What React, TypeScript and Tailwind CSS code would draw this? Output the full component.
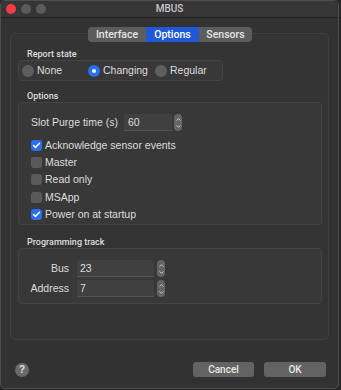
import { Check, ChevronUp, ChevronDown } from 'lucide-react';

const body = { fontFamily: '"Liberation Sans", Arial, sans-serif' };
const ui = { fontFamily: 'Roboto, "Liberation Sans", sans-serif' };

const Stepper = () => (
  <div className="flex h-[17px] w-[8px] flex-col items-center justify-center rounded-[4px] bg-[#646464]">
    <ChevronUp className="h-[7px] w-[7px] text-[#d8d8d8]" strokeWidth={3} />
    <ChevronDown className="h-[7px] w-[7px] text-[#d8d8d8]" strokeWidth={3} />
  </div>
);

const Radio = ({ on, label, w }: { on?: boolean; label: string; w: string }) => (
  <div className={`flex items-center gap-[3px] ${w}`}>
    {on ? (
      <span className="flex h-[12px] w-[12px] items-center justify-center rounded-full bg-[#2a6ef1]">
        <span className="h-[4px] w-[4px] rounded-full bg-white" />
      </span>
    ) : (
      <span className="h-[12px] w-[12px] rounded-full bg-[#5e5e5e]" />
    )}
    <span>{label}</span>
  </div>
);

const CheckRow = ({ on, label }: { on?: boolean; label: string }) => (
  <div className="flex h-[17.2px] items-center gap-[3px]">
    {on ? (
      <span className="flex h-[11px] w-[11px] items-center justify-center rounded-[3px] bg-[#2a6ef1]">
        <Check className="h-[9px] w-[9px] text-white" strokeWidth={4} />
      </span>
    ) : (
      <span className="h-[11px] w-[11px] rounded-[3px] bg-[#5a5a5a]" />
    )}
    <span>{label}</span>
  </div>
);

export default function App() {
  return (
    <div className="h-[390px] w-[341px] bg-[#262626] text-[10.5px] leading-[13px] text-[#dedede]" style={body}>
      <div className="flex h-[389px] w-[339px] flex-col rounded-[5px] border border-[#4e4e4e] bg-[#323232]">
        <div className="relative flex h-[17px] items-center border-b border-[#1f1f1f] bg-[#363636]">
          <div className="ml-[5px] flex gap-[5px]">
            <span className="h-[10px] w-[10px] rounded-full bg-[#fb3a44]" />
            <span className="h-[10px] w-[10px] rounded-full bg-[#5b5b5b]" />
            <span className="h-[10px] w-[10px] rounded-full bg-[#5b5b5b]" />
          </div>
          <div className="absolute inset-x-0 top-[1px] text-center text-[10px] font-medium leading-[14px] text-[#c8c8c8]" style={ui}>MBUS</div>
        </div>

        <div className="px-[9px] pt-[15px]">
          <div className="relative h-[307px] rounded-[5px] border border-[#3f3f3f] bg-[#343434] px-[7px] pt-[14px]">
            <div className="absolute left-[77px] top-[-7px] flex h-[15px] overflow-hidden rounded-[4px] bg-[#5c5c5c] text-[10.5px] font-medium leading-[15px] text-[#e6e6e6]" style={ui}>
              <div className="w-[58px] text-center">Interface</div>
              <div className="w-[53px] bg-[#2058d8] text-center text-white">Options</div>
              <div className="w-[53px] text-center">Sensors</div>
            </div>

            <div className="h-[12px] pl-[9px] text-[9px] font-medium leading-[12px]" style={ui}>Report state</div>
            <div className="flex h-[21px] w-[205px] items-center rounded-[4px] border border-[#444] bg-[#383838] pl-[3px]">
              <Radio label="None" w="w-[66px]" />
              <Radio on label="Changing" w="w-[67px]" />
              <Radio label="Regular" w="w-[60px]" />
            </div>

            <div className="mt-[9px] h-[12px] pl-[9px] text-[9px] font-medium leading-[12px]" style={ui}>Options</div>
            <div className="h-[123px] w-[304px] rounded-[4px] border border-[#444] bg-[#383838] pl-[12px] pt-[11px]">
              <div className="flex h-[17px] items-center">
                <span className="w-[93px]">Slot Purge time (s)</span>
                <div className="h-[17px] w-[48px] border-b border-[#555] bg-[#404040] pl-[4px] leading-[17px]">60</div>
                <div className="ml-[2px]"><Stepper /></div>
              </div>
              <div className="mt-[6px]">
                <CheckRow on label="Acknowledge sensor events" />
                <CheckRow label="Master" />
                <CheckRow label="Read only" />
                <CheckRow label="MSApp" />
                <CheckRow on label="Power on at startup" />
              </div>
            </div>

            <div className="mt-[11px] h-[12px] pl-[9px] text-[9px] font-medium leading-[12px]" style={ui}>Programming track</div>
            <div className="h-[56px] w-[304px] rounded-[4px] border border-[#444] bg-[#383838] pt-[11px]">
              <div className="flex h-[17px] items-center">
                <span className="w-[50px] text-right">Bus</span>
                <div className="ml-[8px] h-[17px] w-[77px] border-b border-[#555] bg-[#404040] pl-[3px] leading-[17px]">23</div>
                <div className="ml-[3px]"><Stepper /></div>
              </div>
              <div className="mt-[3px] flex h-[17px] items-center">
                <span className="w-[50px] text-right">Address</span>
                <div className="ml-[8px] h-[17px] w-[77px] border-b border-[#555] bg-[#404040] pl-[3px] leading-[17px]">7</div>
                <div className="ml-[3px]"><Stepper /></div>
              </div>
            </div>
          </div>

          <div className="mt-[22px] flex items-center">
            <span className="ml-[5px] flex h-[14px] w-[14px] items-center justify-center rounded-full bg-[#6a6a6a] text-[10px] font-bold text-[#e0e0e0]">?</span>
            <div className="ml-auto mr-[3px] flex gap-[10px]" style={ui}>
              <button className="h-[15px] w-[61px] rounded-[3px] bg-[#636363] text-[10px] font-medium leading-[15px] text-[#e8e8e8]">Cancel</button>
              <button className="h-[15px] w-[62px] rounded-[3px] bg-[#636363] text-[10px] font-medium leading-[15px] text-[#e8e8e8]">OK</button>
            </div>
          </div>
        </div>
      </div>
    </div>
  );
}
